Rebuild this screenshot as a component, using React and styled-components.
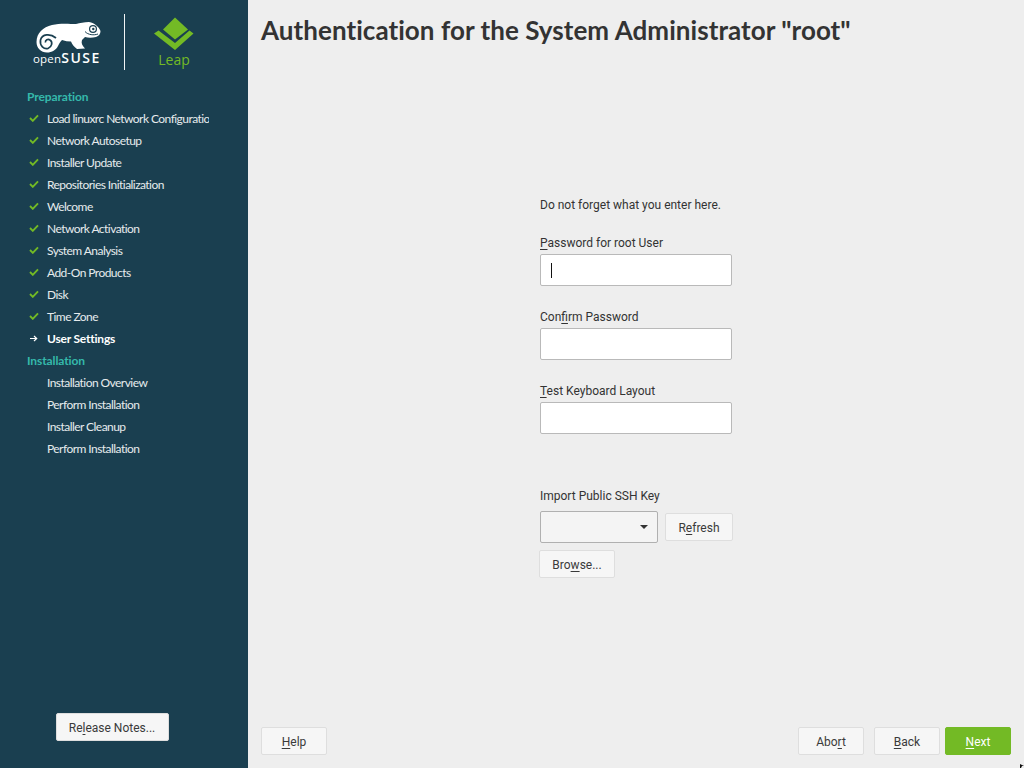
import React from 'react';
import styled, { createGlobalStyle } from 'styled-components';

const Global = createGlobalStyle`
  html, body { margin: 0; padding: 0; background: #eeeeee; }
  #root { width: 1024px; height: 768px; overflow: hidden; }
`;

const Screen = styled.div`
  position: relative;
  display: flex;
  width: 1024px;
  height: 768px;
  font-family: Roboto, "Liberation Sans", sans-serif;
  font-size: 12px;
  color: #333;
`;

const Sidebar = styled.aside`
  display: flex;
  flex-direction: column;
  width: 248px;
  flex: none;
  background: #1a3f50;
`;

const LogoBar = styled.div`
  display: flex;
  height: 86px;
  flex: none;
`;

const SuseLogo = styled.div`
  display: flex;
  flex-direction: column;
  width: 124px;
  flex: none;
  align-items: flex-start;
  padding: 22px 0 0 33px;
  box-sizing: border-box;
`;

const SuseWord = styled.div`
  display: flex;
  align-items: baseline;
  height: 13px;
  line-height: 13px;
  margin-top: -2px;
  color: #fff;
`;

const OpenWord = styled.span`
  font-family: "Open Sans", sans-serif;
  font-size: 11.5px;
  font-weight: 400;
  letter-spacing: 0.2px;
`;

const BoldWord = styled.span`
  font-family: "Open Sans", sans-serif;
  font-size: 14px;
  font-weight: 600;
  letter-spacing: 1.5px;
`;

const Divider = styled.div`
  width: 1px;
  height: 56px;
  margin-top: 14px;
  background: #f0f4f5;
`;

const LeapLogo = styled.div`
  display: flex;
  flex-direction: column;
  align-items: center;
  width: 40px;
  margin: 17px 0 0 29px;
`;

const LeapWord = styled.div`
  font-family: "Open Sans", sans-serif;
  font-size: 14px;
  line-height: 16px;
  margin-top: 1px;
  color: #73ba25;
`;

const Steps = styled.div`
  display: flex;
  flex-direction: column;
  flex: 1;
`;

const Section = styled.div`
  height: 22px;
  line-height: 21px;
  padding-left: 27px;
  font-family: Lato, sans-serif;
  font-size: 12px;
  font-weight: 700;
  letter-spacing: -0.1px;
  color: #35b9ab;
`;

const Step = styled.div`
  display: flex;
  align-items: center;
  height: 22px;
  padding-bottom: 2px;
  box-sizing: border-box;
  width: 209px;
  overflow: hidden;
  white-space: nowrap;
  font-family: Lato, sans-serif;
  font-size: 12px;
  letter-spacing: ${p => (p.$current ? '-0.2px' : '-0.55px')};
  font-weight: ${p => (p.$current ? 700 : 400)};
  color: ${p => (p.$current ? '#ffffff' : '#e6ebed')};
`;

const StepIcon = styled.span`
  display: flex;
  justify-content: center;
  align-items: center;
  width: 47px;
  padding-left: 20px;
  box-sizing: border-box;
  flex: none;
`;

const SideFoot = styled.div`
  display: flex;
  justify-content: center;
  padding: 0 24px 27px 0;
`;

const Main = styled.main`
  display: flex;
  flex-direction: column;
  flex: 1;
  min-width: 0;
`;

const Title = styled.h1`
  margin: 0;
  padding: 10px 0 0 13px;
  height: 40px;
  font-family: Lato, sans-serif;
  font-size: 26px;
  line-height: 40px;
  font-weight: 700;
  letter-spacing: 0.05px;
  color: #333;
  white-space: nowrap;
`;

const Body = styled.div`
  flex: 1;
  display: flex;
  justify-content: center;
  padding-top: 146px;
`;

const Form = styled.div`
  display: flex;
  flex-direction: column;
  width: 192px;
`;

const Text = styled.div`
  height: 16px;
  line-height: 18px;
  white-space: nowrap;
`;

const Field = styled.div`
  display: flex;
  flex-direction: column;
  margin-top: ${p => p.$top}px;
`;

const Input = styled.div`
  display: flex;
  align-items: center;
  height: 32px;
  margin-top: 4px;
  padding-left: 10px;
  box-sizing: border-box;
  background: #fff;
  border: 1px solid #b9b9b9;
  border-radius: 2px;
`;

const Caret = styled.span`
  width: 1px;
  height: 15px;
  background: #111;
`;

const Mn = styled.span`
  text-decoration: underline;
  text-underline-offset: 2px;
  text-decoration-thickness: 1px;
`;

const Row = styled.div`
  display: flex;
  align-items: center;
  gap: 7px;
  margin-top: 8px;
`;

const Combo = styled.div`
  display: flex;
  align-items: center;
  justify-content: flex-end;
  flex: none;
  width: 118px;
  height: 32px;
  padding-right: 9px;
  box-sizing: border-box;
  background: #f4f4f4;
  border: 1px solid #b0b0b0;
  border-radius: 2px;
`;

const Arrow = styled.span`
  width: 0;
  height: 0;
  border-left: 4px solid transparent;
  border-right: 4px solid transparent;
  border-top: 4px solid #333;
`;

const Button = styled.button`
  display: block;
  width: ${p => p.$w}px;
  height: 28px;
  padding: 2px 0 0;
  flex: none;
  box-sizing: border-box;
  font-family: Roboto, sans-serif;
  font-size: 12px;
  color: ${p => (p.$primary ? '#fff' : '#3a3a3a')};
  background: ${p => (p.$primary ? '#73ba25' : '#f6f6f6')};
  border: 1px solid ${p => (p.$primary ? '#73ba25' : '#dedede')};
  border-radius: 2px;
`;

const BrowseWrap = styled.div`
  margin: 7px 0 0 -1px;
`;

const Footer = styled.div`
  display: flex;
  align-items: center;
  padding: 0 13px 13px;
`;

const Spacer = styled.div`
  flex: 1;
`;

const Gap = styled.div`
  width: ${p => p.$w}px;
`;

const Pointer = styled.svg`
  position: absolute;
  right: 0;
  bottom: 0;
`;

const Check = () => (
  <svg width="10" height="8" viewBox="0 0 10 8">
    <path d="M1 4l2.8 2.8L9 1.3" fill="none" stroke="#73ba25" strokeWidth="1.9" />
  </svg>
);

const ArrowRight = () => (
  <svg width="8" height="7" viewBox="0 0 8 7">
    <path d="M0 3.5h6.5M4 1l2.7 2.5L4 6" fill="none" stroke="#fff" strokeWidth="1.2" />
  </svg>
);

const Gecko = () => (
  <svg width="68" height="31" viewBox="33 22 68 31">
    <path
      fill="#fff"
      d="M36.500 42C36.500 33 43 27 52 25C60 23 70 24 76 24C80 23 84 22 89 22C95 23 99 27 100.500 31C100.500 34 99 36 96 37C92 38 88 38 85 37L82 40C81 43 82 45.500 85 48.500L77 49C74 47 72 44 71 41.500C68 41.500 65 41 62 40C60 42 59 44 58 46C56 50 52 52.500 47 52.500C41 52.500 36.500 48 36.500 42Z"
    />
    <path
      d="M56 38C50 33 42 34 40.500 40C39.500 46 44 49.500 48 48.500C52 47 53 42 50 40C48 38.500 45 40 45.500 42.500"
      fill="none"
      stroke="#1a3f50"
      strokeWidth="1.7"
    />
    <circle cx="93" cy="29" r="4" fill="#1a3f50" />
    <circle cx="93" cy="29" r="2.800" fill="#fff" />
    <circle cx="93.300" cy="29" r="1.200" fill="#1a3f50" />
    <path d="M85 31.500C88 35 94 35.500 98 34" fill="none" stroke="#1a3f50" strokeWidth="1" />
  </svg>
);

const Leap = () => (
  <svg width="40" height="34" viewBox="154 17 40 34">
    <path fill="#73ba25" d="M175 17.500L188 29.500L175 39.500L163 29.500Z" />
    <path fill="#73ba25" d="M154 33.500L158.500 30.500L175 43L189.500 30.500L193.500 33.500L175 50Z" />
  </svg>
);

const done = [
  'Load linuxrc Network Configuration',
  'Network Autosetup',
  'Installer Update',
  'Repositories Initialization',
  'Welcome',
  'Network Activation',
  'System Analysis',
  'Add-On Products',
  'Disk',
  'Time Zone',
];

const todo = ['Installation Overview', 'Perform Installation', 'Installer Cleanup', 'Perform Installation'];

export default function App() {
  return (
    <Screen>
      <Global />
      <Sidebar>
        <LogoBar>
          <SuseLogo>
            <Gecko />
            <SuseWord>
              <OpenWord>open</OpenWord>
              <BoldWord>SUSE</BoldWord>
            </SuseWord>
          </SuseLogo>
          <Divider />
          <LeapLogo>
            <Leap />
            <LeapWord>Leap</LeapWord>
          </LeapLogo>
        </LogoBar>
        <Steps>
          <Section>Preparation</Section>
          {done.map(s => (
            <Step key={s}>
              <StepIcon><Check /></StepIcon>
              {s}
            </Step>
          ))}
          <Step $current>
            <StepIcon><ArrowRight /></StepIcon>
            User Settings
          </Step>
          <Section>Installation</Section>
          {todo.map((s, i) => (
            <Step key={i}>
              <StepIcon />
              {s}
            </Step>
          ))}
        </Steps>
        <SideFoot>
          <Button $w={113}>Re<Mn>l</Mn>ease Notes...</Button>
        </SideFoot>
      </Sidebar>
      <Main>
        <Title>Authentication for the System Administrator "root"</Title>
        <Body>
          <Form>
            <Text>Do not forget what you enter here.</Text>
            <Field $top={22}>
              <Text><Mn>P</Mn>assword for root User</Text>
              <Input><Caret /></Input>
            </Field>
            <Field $top={22}>
              <Text>Con<Mn>f</Mn>irm Password</Text>
              <Input />
            </Field>
            <Field $top={22}>
              <Text><Mn>T</Mn>est Keyboard Layout</Text>
              <Input />
            </Field>
            <Field $top={53}>
              <Text>Import Public SSH Key</Text>
              <Row>
                <Combo><Arrow /></Combo>
                <Button $w={68}>R<Mn>e</Mn>fresh</Button>
              </Row>
            </Field>
            <BrowseWrap>
              <Button $w={76}>Bro<Mn>w</Mn>se...</Button>
            </BrowseWrap>
          </Form>
        </Body>
        <Footer>
          <Button $w={66}><Mn>H</Mn>elp</Button>
          <Spacer />
          <Button $w={66}>Abo<Mn>r</Mn>t</Button>
          <Gap $w={10} />
          <Button $w={66}><Mn>B</Mn>ack</Button>
          <Gap $w={5} />
          <Button $w={66} $primary><Mn>N</Mn>ext</Button>
        </Footer>
      </Main>
      <Pointer width="5" height="5" viewBox="0 0 5 5">
        <path d="M1 1v4h1l1-2h2z" fill="#111" />
      </Pointer>
    </Screen>
  );
}
